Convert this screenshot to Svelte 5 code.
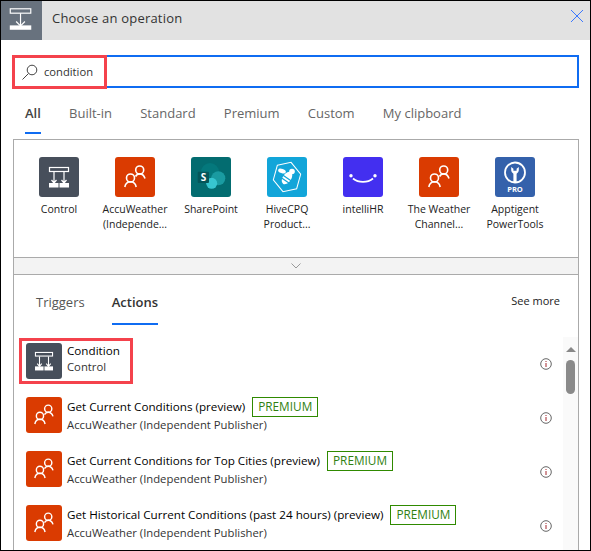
<script lang="ts">
  const tabs = ["All", "Built-in", "Standard", "Premium", "Custom", "My clipboard"];

  const connectors = [
    { kind: "control", bg: "#474f5b", label: ["Control"] },
    { kind: "people", bg: "#da3b01", label: ["AccuWeather", "(Independe..."] },
    { kind: "sharepoint", bg: "#036c70", label: ["SharePoint"] },
    { kind: "hive", bg: "#12a5d9", label: ["HiveCPQ", "Product..."] },
    { kind: "smile", bg: "#432ff0", label: ["intelliHR"] },
    { kind: "people", bg: "#da3b01", label: ["The Weather", "Channel..."] },
    { kind: "pro", bg: "#3461ab", label: ["Apptigent", "PowerTools"] },
  ];

  const rows = [
    { kind: "control", bg: "#474f5b", title: "Condition", sub: "Control", premium: false },
    { kind: "people", bg: "#da3b01", title: "Get Current Conditions (preview)", sub: "AccuWeather (Independent Publisher)", premium: true },
    { kind: "people", bg: "#da3b01", title: "Get Current Conditions for Top Cities (preview)", sub: "AccuWeather (Independent Publisher)", premium: true },
    { kind: "people", bg: "#da3b01", title: "Get Historical Current Conditions (past 24 hours) (preview)", sub: "AccuWeather (Independent Publisher)", premium: true },
  ];
</script>

{#snippet glyph(kind)}
  <svg viewBox="0 0 40 40" class="glyph" aria-hidden="true">
    {#if kind === "control"}
      <g fill="none" stroke="#fff" stroke-width="1.2">
        <rect x="10.500" y="10.500" width="19" height="4" />
        <path d="M15 15v11M25 15v11M12.500 23l2.500 3 2.500-3M22.500 23l2.500 3 2.500-3" />
      </g>
      <rect x="10" y="26" width="9.500" height="4.500" fill="#fff" />
      <rect x="20.500" y="26" width="9.500" height="4.500" fill="#fff" />
    {:else if kind === "people"}
      <g fill="none" stroke="#fff" stroke-width="1.600">
        <circle cx="24.700" cy="13" r="4" />
        <path d="M20.500 19.500c1-1.800 2.500-2.600 4.200-2.600 2.300 0 4.300 1.400 5.300 4.600" />
        <circle cx="15.500" cy="21" r="4" />
        <path d="M9.800 30c.7-3.400 3-5.200 5.700-5.200s5 1.800 5.700 5.200" />
      </g>
    {:else if kind === "sharepoint"}
      <circle cx="19" cy="15" r="9" fill="#04787c" />
      <circle cx="27.300" cy="21.300" r="7" fill="#1a9ba1" />
      <circle cx="20.700" cy="26.300" r="5.500" fill="#37c6d0" />
      <rect x="6.700" y="14.700" width="11.300" height="11.300" rx="1" fill="#04565a" />
      <text x="12.400" y="24" class="sp">S</text>
    {:else if kind === "hive"}
      <path d="M13 6.500h14l7 13.500-7 13.500H13L6 20z" fill="none" stroke="#fff" stroke-width="1" transform="rotate(-12 20 20)" />
      <ellipse cx="15" cy="14" rx="4" ry="2.200" fill="#fff" transform="rotate(20 15 14)" />
      <ellipse cx="20" cy="21" rx="4.200" ry="7" fill="#fff" transform="rotate(35 20 21)" />
      <path d="M16 18.200l8 5.600M14.300 20.700l8 5.600" stroke="#12a5d9" stroke-width="1.200" />
      <circle cx="25" cy="14.500" r="2.800" fill="#fff" />
    {:else if kind === "smile"}
      <circle cx="8" cy="18.700" r="1.700" fill="#fff" />
      <circle cx="32" cy="18.700" r="1.700" fill="#fff" />
      <path d="M10 21.500c5.500 4.500 14.500 4.500 20 0" fill="none" stroke="#fff" stroke-width="1.800" />
    {:else if kind === "pro"}
      <circle cx="20" cy="15.500" r="10" fill="none" stroke="#fff" stroke-width="1.800" />
      <path d="M16.200 10v3.300a4 4 0 0 0 2.200 3.500V25h3.200v-8.200a4 4 0 0 0 2.200-3.500V10l-2.200 1.800v2h-3.200v-2z" fill="#fff" />
      <text x="20" y="34.500" class="pro">PRO</text>
    {/if}
  </svg>
{/snippet}

<div class="frame">
  <header class="top">
    <span class="top-icon">
      <svg width="42" height="39" viewBox="0 0 42 39" aria-hidden="true">
        <rect x="9.500" y="7.500" width="21" height="4.500" fill="none" stroke="#fff" stroke-width="1.200" />
        <path d="M20 12v13M15.500 20.500l4.500 4.500 4.500-4.500" fill="none" stroke="#fff" stroke-width="1.200" />
        <rect x="9" y="24.500" width="22" height="4.500" fill="#fff" />
      </svg>
    </span>
    <span class="top-title">Choose an operation</span>
    <svg class="close" width="14" height="14" viewBox="0 0 14 14" aria-hidden="true">
      <path d="M1 1l12 12M13 1L1 13" stroke="#3b78ff" stroke-width="1" fill="none" />
    </svg>
  </header>

  <div class="search">
    <svg width="18" height="18" viewBox="0 0 18 18" aria-hidden="true">
      <circle cx="11" cy="7" r="4.800" fill="none" stroke="#444" stroke-width="1" />
      <path d="M7.500 10.500L1.500 16.500" stroke="#444" stroke-width="1" />
    </svg>
    <span>condition</span>
    <div class="mark mark-search"></div>
  </div>

  <nav class="tabs">
    {#each tabs as tab, i}
      <span class="tab" class:on={i === 0}>{tab}</span>
    {/each}
  </nav>

  <section class="panel">
    <div class="connectors">
      {#each connectors as c}
        <div class="connector">
          <span class="tile" style:background={c.bg}>{@render glyph(c.kind)}</span>
          {#each c.label as line}
            <span class="connector-line">{line}</span>
          {/each}
        </div>
      {/each}
    </div>

    <div class="collapse">
      <svg width="10" height="6" viewBox="0 0 10 6" aria-hidden="true">
        <path d="M.5.500L5 5 9.500.500" fill="none" stroke="#999" stroke-width="1" />
      </svg>
    </div>

    <div class="subtabs">
      <span class="subtab">Triggers</span>
      <span class="subtab on">Actions</span>
      <span class="seemore">See more</span>
    </div>

    <div class="results">
      <div class="list">
        {#each rows as r, i}
          <div class="row">
            <span class="row-tile" style:background={r.bg}>{@render glyph(r.kind)}</span>
            <div class="row-text">
              <div class="row-title">
                <span class="name">{r.title}</span>
                {#if r.premium}<span class="badge">PREMIUM</span>{/if}
              </div>
              <div class="row-sub">{r.sub}</div>
            </div>
            <svg class="info" width="12" height="12" viewBox="0 0 12 12" aria-hidden="true">
              <circle cx="6" cy="6" r="5.300" fill="none" stroke="#666" stroke-width="1" />
              <path d="M6 3v1M6 5v4" stroke="#a4262c" stroke-width="1" />
            </svg>
            {#if i === 0}<div class="mark mark-row"></div>{/if}
          </div>
        {/each}
      </div>
      <div class="scrollbar">
        <span class="arrow"></span>
        <span class="thumb"></span>
      </div>
    </div>
  </section>
</div>

<style>
  :global(body) {
    margin: 0;
    background: #fff;
  }
  .frame {
    width: 591px;
    height: 551px;
    box-sizing: border-box;
    border: 1px solid #000;
    overflow: hidden;
    font-family: "Open Sans", "Noto Sans", sans-serif;
    color: #222;
  }
  .top {
    display: flex;
    align-items: center;
    height: 39px;
    background: #e2e2e2;
  }
  .top-icon {
    display: flex;
    width: 41px;
    height: 39px;
    background: #68727e;
  }
  .top-title {
    margin: -5px 0 0 10px;
    font-size: 13px;
    letter-spacing: 0.2px;
    color: #333;
    flex: 1;
  }
  .close {
    margin-right: 6px;
    margin-top: -10px;
  }
  .search {
    position: relative;
    display: flex;
    align-items: center;
    box-sizing: border-box;
    height: 33px;
    width: 566px;
    margin: 15px 0 0 12px;
    padding-left: 6px;
    border: 2px solid #0f6cf2;
    font-size: 11.200px;
    color: #333;
  }
  .search span {
    margin-left: 5px;
  }
  .mark {
    position: absolute;
    box-sizing: border-box;
    border: 3px solid #f4424c;
    pointer-events: none;
  }
  .mark-search {
    left: -3px;
    top: -2px;
    width: 95px;
    height: 34px;
  }
  .tabs {
    display: flex;
    gap: 28.200px;
    height: 51px;
    margin-left: 24px;
    font-size: 13px;
    color: #666;
  }
  .tab {
    box-sizing: border-box;
    height: 46px;
    padding-top: 16px;
    line-height: 18px;
  }
  .tab.on {
    font-weight: 600;
    color: #444;
    border-bottom: 2px solid #0f6cf2;
  }
  .panel {
    box-sizing: border-box;
    width: 566px;
    height: 411px;
    margin-left: 12px;
    border: 1px solid #aaa;
    border-bottom: 0;
  }
  .connectors {
    display: flex;
    height: 117px;
    padding: 17px 0 0 7px;
    box-sizing: border-box;
  }
  .connector {
    display: flex;
    flex-direction: column;
    align-items: center;
    width: 76px;
    font-size: 10.500px;
    line-height: 15px;
    color: #222;
  }
  .tile {
    width: 40px;
    height: 40px;
    margin-bottom: 5px;
    border-radius: 3px;
  }
  .glyph {
    display: block;
    width: 100%;
    height: 100%;
  }
  .sp {
    fill: #fff;
    font-size: 10px;
    font-weight: 700;
    text-anchor: middle;
  }
  .pro {
    fill: #fff;
    font-size: 7.500px;
    font-weight: 700;
    text-anchor: middle;
  }
  .connector-line {
    white-space: nowrap;
  }
  .collapse {
    display: flex;
    align-items: center;
    justify-content: center;
    box-sizing: border-box;
    height: 18px;
    background: #f3f3f3;
    border-top: 1px solid #aaa;
    border-bottom: 1px solid #aaa;
  }
  .subtabs {
    display: flex;
    align-items: flex-start;
    gap: 27px;
    height: 50px;
    padding: 0 18px 0 22px;
    font-size: 13px;
    color: #555;
  }
  .subtab {
    box-sizing: border-box;
    height: 50px;
    padding-top: 17px;
    line-height: 20px;
  }
  .subtab.on {
    font-weight: 600;
    color: #333;
    border-bottom: 2px solid #0f6cf2;
  }
  .seemore {
    margin-left: auto;
    padding-top: 17px;
    line-height: 18px;
    font-size: 11px;
    color: #222;
  }
  .results {
    display: flex;
    height: 226px;
    overflow: hidden;
  }
  .list {
    flex: 1;
    padding: 18px 0 0 12px;
  }
  .row {
    position: relative;
    display: flex;
    align-items: flex-start;
    height: 54px;
    font-size: 11.300px;
    line-height: 16px;
  }
  .row-tile {
    width: 36px;
    height: 36px;
    border-radius: 3px;
    flex: none;
  }
  .row-text {
    margin-left: 5px;
    flex: 1;
  }
  .row-title {
    display: flex;
    align-items: center;
    gap: 7px;
  }
  .name {
    font-size: 11.660px;
    font-weight: 500;
    color: #000;
    white-space: nowrap;
  }
  .row-sub {
    color: #333;
  }
  .badge {
    box-sizing: border-box;
    height: 20px;
    padding: 0 5px;
    line-height: 17px;
    font-size: 11.800px;
    color: #2f7f10;
    border: 1px solid #2f8a00;
  }
  .info {
    margin: 15px 11px 0 0;
    flex: none;
  }
  .mark-row {
    left: -7px;
    top: -5px;
    width: 114px;
    height: 46px;
  }
  .scrollbar {
    width: 15px;
    margin-top: 12px;
    background: #fafafa;
    flex: none;
    display: flex;
    flex-direction: column;
    align-items: center;
    padding-top: 10px;
    box-sizing: border-box;
  }
  .arrow {
    width: 0;
    height: 0;
    border: 5px solid transparent;
    border-top: 0;
    border-bottom: 5px solid #888;
  }
  .thumb {
    width: 9px;
    height: 34px;
    margin-top: 8px;
    border-radius: 5px;
    background: #8a8a8a;
  }
</style>
